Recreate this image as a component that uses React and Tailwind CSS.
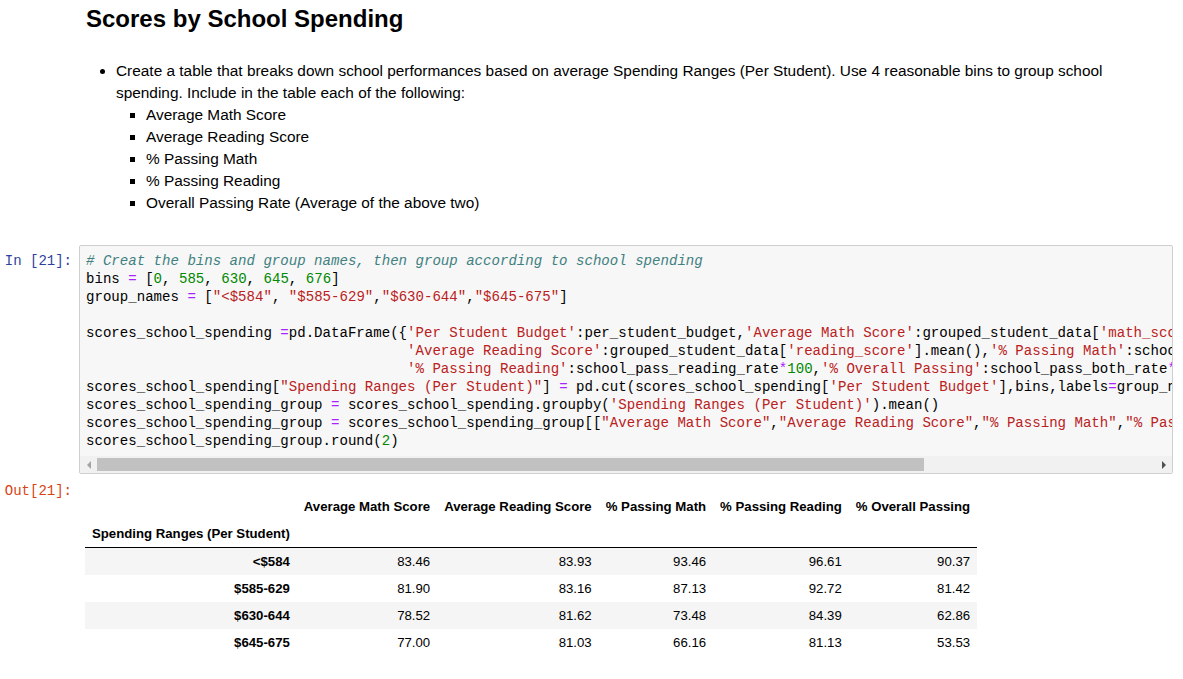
import React from 'react';

// Jupyter classic notebook: markdown cell, code cell, dataframe output

const PAD = ' '.repeat(38);

const CODE = [
    '# Creat the bins and group names, then group according to school spending',
    'bins = [0, 585, 630, 645, 676]',
    'group_names = ["<$584", "$585-629","$630-644","$645-675"]',
    '',
    "scores_school_spending =pd.DataFrame({'Per Student Budget':per_student_budget,'Average Math Score':grouped_student_data['math_score'].mean(),",
    PAD + "'Average Reading Score':grouped_student_data['reading_score'].mean(),'% Passing Math':school_pass_math_rate*100,",
    PAD + "'% Passing Reading':school_pass_reading_rate*100,'% Overall Passing':school_pass_both_rate*100})",
    "scores_school_spending[\"Spending Ranges (Per Student)\"] = pd.cut(scores_school_spending['Per Student Budget'],bins,labels=group_names)",
    "scores_school_spending_group = scores_school_spending.groupby('Spending Ranges (Per Student)').mean()",
    'scores_school_spending_group = scores_school_spending_group[["Average Math Score","Average Reading Score","% Passing Math","% Passing Reading","% Overall Passing"]]',
    'scores_school_spending_group.round(2)',
];

const COLUMNS = [
    'Average Math Score',
    'Average Reading Score',
    '% Passing Math',
    '% Passing Reading',
    '% Overall Passing',
];

const ROWS = [
    ['<$584', '83.46', '83.93', '93.46', '96.61', '90.37'],
    ['$585-629', '81.90', '83.16', '87.13', '92.72', '81.42'],
    ['$630-644', '78.52', '81.62', '73.48', '84.39', '62.86'],
    ['$645-675', '77.00', '81.03', '66.16', '81.13', '53.53'],
];

const TOKEN = /(#.*$)|('[^']*'|"[^"]*")|(\b\d+\b)|([=*])/g;

function highlight(line) {
    const out = [];
    let last = 0;
    let m;
    TOKEN.lastIndex = 0;
    while ((m = TOKEN.exec(line))) {
        if (m.index > last) out.push(<span key={'t' + last}>{line.slice(last, m.index)}</span>);
        const cls = m[1]
            ? 'text-[#408080] italic'
            : m[2]
              ? 'text-[#ba2121]'
              : m[3]
                ? 'text-[#008800]'
                : 'text-[#aa22ff]';
        out.push(
            <span key={'m' + m.index} className={cls}>
                {m[0]}
            </span>
        );
        last = m.index + m[0].length;
    }
    if (last < line.length) out.push(<span key={'t' + last}>{line.slice(last)}</span>);
    return out;
}

const mono = { fontFamily: '"Liberation Mono", "DejaVu Sans Mono", monospace' };

export default function App() {
    return (
        <div
            className="h-[679px] w-full overflow-hidden bg-white text-black"
            style={{ fontFamily: '"Liberation Sans", Arial, sans-serif' }}
        >
            {/* Markdown cell */}
            <div className="ml-[86px] mr-[17px] pt-[5px]">
                <h2 className="text-[24px] leading-[28px] font-bold">Scores by School Spending</h2>
                <ul className="mt-[27px] list-disc pl-[30px] text-[15.4px] leading-[22px]">
                    <li>
                        Create a table that breaks down school performances based on average Spending Ranges (Per
                        Student). Use 4 reasonable bins to group school spending. Include in the table each of the
                        following:
                        <ul className="list-[square] pl-[30px]">
                            <li>Average Math Score</li>
                            <li>Average Reading Score</li>
                            <li>% Passing Math</li>
                            <li>% Passing Reading</li>
                            <li>Overall Passing Rate (Average of the above two)</li>
                        </ul>
                    </li>
                </ul>
            </div>

            {/* Code cell */}
            <div className="mt-[31px] flex mr-[10px]">
                <div
                    className="w-[79px] shrink-0 pt-[7px] pr-[7px] text-right text-[14px] leading-[18px] text-[#303f9f]"
                    style={mono}
                >
                    In [21]:
                </div>
                <div className="min-w-0 flex-1 rounded-[2px] border border-[#cfcfcf] bg-[#f7f7f7]">
                    <div
                        className="overflow-hidden whitespace-pre pt-[6px] pb-[6px] pl-[6px] text-[14.08px] leading-[18px]"
                        style={mono}
                    >
                        {CODE.map((line, i) => (
                            <div key={i} className="h-[18px]">
                                {highlight(line)}
                            </div>
                        ))}
                    </div>
                    {/* horizontal scrollbar */}
                    <div className="flex h-[17px] items-center bg-[#f1f1f1]">
                        <div className="flex w-[17px] shrink-0 justify-center">
                            <span className="h-0 w-0 border-y-[4px] border-r-[4px] border-y-transparent border-r-[#a3a3a3]" />
                        </div>
                        <div className="h-[13px] w-[827px] bg-[#c1c1c1]" />
                        <div className="flex-1" />
                        <div className="flex w-[17px] shrink-0 justify-center">
                            <span className="h-0 w-0 border-y-[4px] border-l-[4px] border-y-transparent border-l-[#505050]" />
                        </div>
                    </div>
                </div>
            </div>

            {/* Output */}
            <div className="mt-[8px] flex">
                <div
                    className="w-[79px] shrink-0 pr-[7px] text-right text-[14px] leading-[18px] text-[#d84315]"
                    style={mono}
                >
                    Out[21]:
                </div>
                <div className="ml-[6px] mt-[11px]">
                    <table className="border-collapse whitespace-nowrap text-[13.2px] leading-[13px]">
                        <thead className="border-b border-black">
                            <tr>
                                <th className="px-[7px] py-[7px]" />
                                {COLUMNS.map((c) => (
                                    <th key={c} className="px-[7px] py-[7px] text-right font-bold">
                                        {c}
                                    </th>
                                ))}
                            </tr>
                            <tr>
                                <th className="px-[7px] py-[7px] text-left font-bold">Spending Ranges (Per Student)</th>
                                {COLUMNS.map((c) => (
                                    <th key={c} className="px-[7px] py-[7px]" />
                                ))}
                            </tr>
                        </thead>
                        <tbody>
                            {ROWS.map((row, i) => (
                                <tr key={row[0]} className={i % 2 === 0 ? 'bg-[#f5f5f5]' : ''}>
                                    <th className="px-[7px] py-[7px] text-right font-bold">{row[0]}</th>
                                    {row.slice(1).map((v, j) => (
                                        <td key={j} className="px-[7px] py-[7px] text-right">
                                            {v}
                                        </td>
                                    ))}
                                </tr>
                            ))}
                        </tbody>
                    </table>
                </div>
            </div>
        </div>
    );
}
